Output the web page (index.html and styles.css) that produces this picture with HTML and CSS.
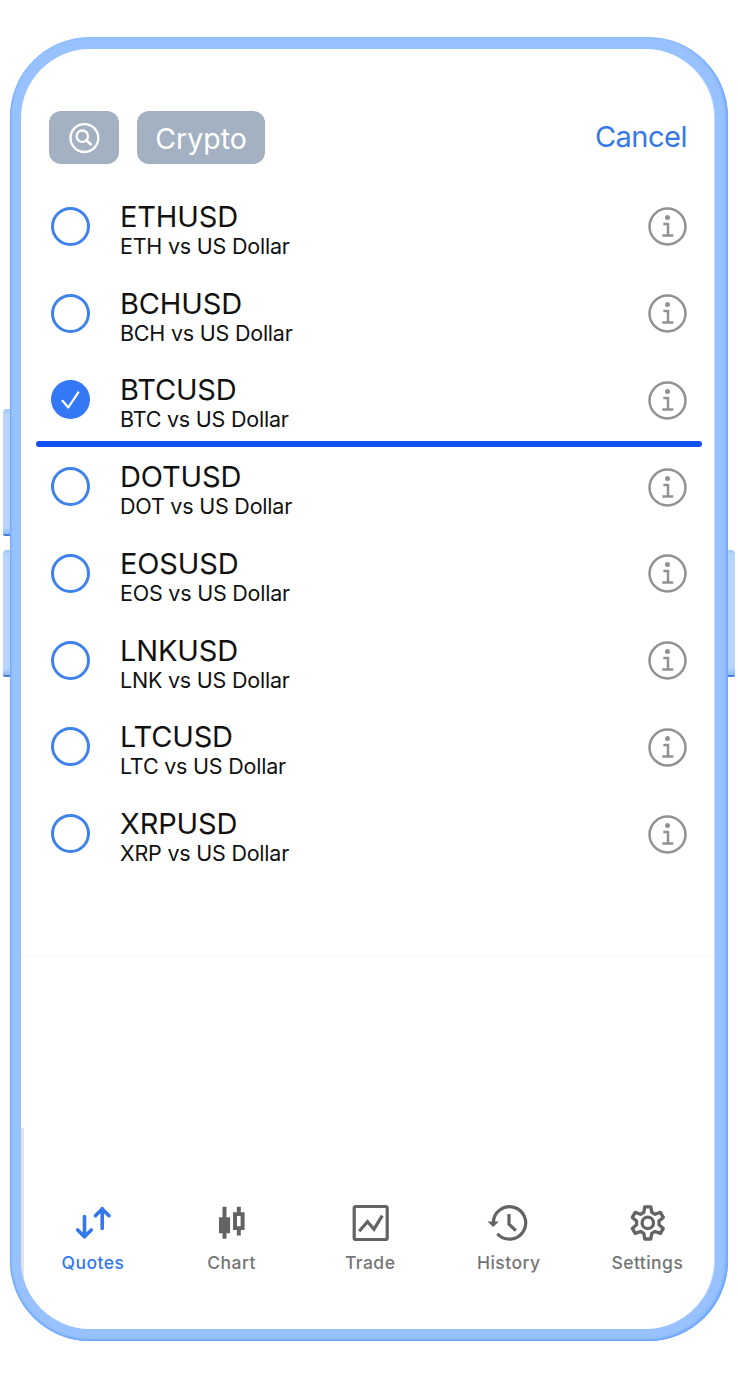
FILE: index.html
```html
<!DOCTYPE html>
<html lang="en">
<head>
  <meta charset="UTF-8">
  <title>Crypto quotes</title>
  <link rel="stylesheet" href="styles.css">
</head>
<body>
  <!-- shared icons -->
  <svg class="sprite">
    <symbol id="info" viewBox="0 0 40 40">
      <circle cx="20.5" cy="20.5" r="18" fill="none" stroke="currentColor" stroke-width="2.5"/>
      <circle cx="20.5" cy="11.5" r="2.5" fill="currentColor"/>
      <path d="M16.3 18h4.700v11M15.300 29.400h11" fill="none" stroke="currentColor" stroke-width="2.500"/>
    </symbol>
  </svg>

  <div class="phone">
    <span class="side-btn volume-up"></span>
    <span class="side-btn volume-down"></span>
    <span class="side-btn power"></span>

    <div class="screen">
      <header class="topbar">
        <button class="chip chip-search">
          <svg width="32" height="32" viewBox="0 0 32 32" fill="none" stroke="#fff" stroke-width="2.3">
            <circle cx="16.4" cy="16" r="13.9"/>
            <circle cx="14.3" cy="14.2" r="5.7"/>
            <path d="M18.4 18.2l5.200 5" stroke-width="2.8"/>
          </svg>
        </button>
        <button class="chip chip-crypto">Crypto</button>
        <a class="cancel">Cancel</a>
      </header>

      <ul class="list">
        <li class="row">
          <span class="radio"></span>
          <div class="names"><b>ETHUSD</b><small>ETH vs US Dollar</small></div>
          <svg class="info"><use href="#info"/></svg>
        </li>
        <li class="row">
          <span class="radio"></span>
          <div class="names"><b>BCHUSD</b><small>BCH vs US Dollar</small></div>
          <svg class="info"><use href="#info"/></svg>
        </li>
        <li class="row selected">
          <span class="radio">
            <svg width="39" height="39" viewBox="0 0 39 39" fill="none" stroke="#fff" stroke-width="2.2" stroke-linecap="round" stroke-linejoin="round">
              <path d="M11.5 20.8l5.8 6.7L27.3 12.3"/>
            </svg>
          </span>
          <div class="names"><b>BTCUSD</b><small>BTC vs US Dollar</small></div>
          <svg class="info"><use href="#info"/></svg>
        </li>
        <li class="row">
          <span class="radio"></span>
          <div class="names"><b>DOTUSD</b><small>DOT vs US Dollar</small></div>
          <svg class="info"><use href="#info"/></svg>
        </li>
        <li class="row">
          <span class="radio"></span>
          <div class="names"><b>EOSUSD</b><small>EOS vs US Dollar</small></div>
          <svg class="info"><use href="#info"/></svg>
        </li>
        <li class="row">
          <span class="radio"></span>
          <div class="names"><b>LNKUSD</b><small>LNK vs US Dollar</small></div>
          <svg class="info"><use href="#info"/></svg>
        </li>
        <li class="row">
          <span class="radio"></span>
          <div class="names"><b>LTCUSD</b><small>LTC vs US Dollar</small></div>
          <svg class="info"><use href="#info"/></svg>
        </li>
        <li class="row">
          <span class="radio"></span>
          <div class="names"><b>XRPUSD</b><small>XRP vs US Dollar</small></div>
          <svg class="info"><use href="#info"/></svg>
        </li>
      </ul>

      <nav class="tabs">
        <a class="tab active">
          <svg class="icon" viewBox="0 0 40 40" fill="none" stroke="currentColor" stroke-width="3.6" stroke-linecap="round" stroke-linejoin="round">
            <path d="M11.5 14.5v20M4.7 28l6.8 6.8 6.8-6.8M29.2 26.500V6.500M22.400 13.700l6.800-6.800 6.800 6.800"/>
          </svg>
          <span>Quotes</span>
        </a>
        <a class="tab">
          <svg class="icon" viewBox="0 0 40 40" fill="currentColor">
            <path d="M10.5 4.8h4v10.500h3.600v16h-3.600v5.500h-4v-5.500H7v-16h3.500z"/>
            <path fill-rule="evenodd" d="M24.8 4.800h4v5.500h3.800v17.700h-3.800v5.500h-4V28H21V10.300h3.800zM25 14v10.300h3.600V14z"/>
          </svg>
          <span>Chart</span>
        </a>
        <a class="tab">
          <svg class="icon" viewBox="0 0 40 40" fill="none" stroke="currentColor" stroke-width="3.2" stroke-linejoin="round">
            <rect x="4.2" y="4.500" width="33" height="33" rx="1.5"/>
            <path d="M9.200 29.200l8.300-9.500 6.500 7.500 8.300-13.500" stroke-linejoin="miter"/>
          </svg>
          <span>Trade</span>
        </a>
        <a class="tab">
          <svg class="icon" viewBox="0 0 40 40" fill="none" stroke="currentColor" stroke-width="3.2">
            <path d="M4.300 20.900A16.200 16.200 0 1 1 8.400 31.700"/>
            <path d="M-1.500 19.500h11.400l-5.700 5.500z" fill="currentColor" stroke="none"/>
            <path d="M20 12v10.200l6.800 6.400"/>
          </svg>
          <span>History</span>
        </a>
        <a class="tab">
          <svg class="icon" viewBox="0 0 40 40" fill="none" stroke="currentColor" stroke-width="3.300" stroke-linejoin="round">
            <path d="M17.800 4.800h6l1 5.600 3.300 1.900 5.300-1.900 2.900 5-4.300 3.700v3.600l4.300 3.700-2.900 5-5.300-1.900-3.300 1.900-1 5.600h-6l-1-5.600-3.300-1.900-5.300 1.900-2.900-5 4.300-3.700v-3.600l-4.300-3.700 2.900-5 5.300 1.900 3.300-1.900z"/>
            <circle cx="20.800" cy="20.900" r="5.700"/>
          </svg>
          <span>Settings</span>
        </a>
      </nav>
    </div>
  </div>
</body>
</html>
```

FILE: styles.css
```css
* {
  box-sizing: border-box;
}

body {
  margin: 0;
  padding: 37px 0 0 10px;
  background: #fff;
  font-family: Inter, "Liberation Sans", sans-serif;
}

.sprite {
  position: absolute;
  width: 0;
  height: 0;
}

/* phone body */
.phone {
  position: relative;
  width: 718px;
  height: 1304px;
  padding: 12px 14px 12px 11px;
  border-radius: 80px;
  background: #97c2ff;
  box-shadow: inset 1px -1px 2px #6ba5ff, inset -2px -1px 3px #6ba5ff;
}

.side-btn {
  position: absolute;
  width: 7px;
  height: 127px;
  background: linear-gradient(to bottom, #9cc6fb, #b6d6ff 5px, #b6d6ff 118px, #8dbcfa);
  border-bottom: 2px solid #4480dc;
}

.volume-up {
  left: -7px;
  top: 372px;
  border-radius: 4px 0 0 2px;
}

.volume-down {
  left: -7px;
  top: 513px;
  border-radius: 4px 0 0 2px;
}

.power {
  right: -7px;
  top: 513px;
  border-radius: 0 4px 2px 0;
}

.screen {
  position: relative;
  display: flex;
  flex-direction: column;
  height: 1280px;
  overflow: hidden;
  border-radius: 69px;
  background: #fff;
  box-shadow: 1px 0 0 #c4ddff;
}

/* thin grey strip along the lower left edge */
.screen::before {
  content: "";
  position: absolute;
  left: 0;
  bottom: 0;
  width: 3px;
  height: 201px;
  background: #e3e3e5;
}

/* header */
.topbar {
  display: flex;
  align-items: center;
  gap: 18px;
  height: 53px;
  margin: 62px 27px 19px 28px;
}

.chip {
  display: flex;
  align-items: center;
  justify-content: center;
  height: 53px;
  padding: 0;
  border: none;
  border-radius: 12px;
  background: #a3b1c2;
  color: #fff;
  font-family: inherit;
  font-size: 28.5px;
}

.chip-search {
  width: 70px;
}

.chip-crypto {
  width: 128px;
  padding-top: 2px;
}

.cancel {
  margin: -2px 0 0 auto;
  color: #3478e8;
  font-size: 29px;
  letter-spacing: -0.5px;
}

/* symbols */
.list {
  margin: 0;
  padding: 0;
  height: 773px;
  list-style: none;
}

.row {
  position: relative;
  display: flex;
  align-items: center;
  height: 86.75px;
  padding: 0 27px 0 30px;
}

.radio {
  width: 39px;
  height: 39px;
  border: 3px solid #3f82ee;
  border-radius: 50%;
}

.names {
  flex: 1;
  margin-left: 30px;
  padding-top: 8px;
  color: #111;
}

.names b,
.names small {
  display: block;
  font-weight: 400;
}

.names b {
  font-size: 29px;
  letter-spacing: -0.15px;
  line-height: 32px;
}

.names small {
  font-size: 21.5px;
  letter-spacing: -0.22px;
  line-height: 27px;
}

.info {
  width: 40px;
  height: 40px;
  color: #929292;
}

.selected .radio {
  border: none;
  background: #3478f6;
}

.selected::after {
  content: "";
  position: absolute;
  left: 15px;
  right: 12px;
  bottom: -4px;
  height: 6px;
  border-radius: 3px;
  background: #1251ee;
}

/* bottom tabs */
.tabs {
  flex: 1;
  display: grid;
  grid-template-columns: repeat(5, 138.6px);
  align-content: start;
  padding: 245px 0 0 2.7px;
  border-top: 1px solid #f7f7f7;
}

.tab {
  display: flex;
  flex-direction: column;
  align-items: center;
  color: #757575;
  font-size: 17.5px;
  font-weight: 500;
  letter-spacing: 0.45px;
  line-height: 24px;
}

.icon {
  width: 40px;
  height: 40px;
  margin-bottom: 9px;
  overflow: visible;
  color: #636363;
}

.active,
.active .icon {
  color: #3478f0;
}
```
